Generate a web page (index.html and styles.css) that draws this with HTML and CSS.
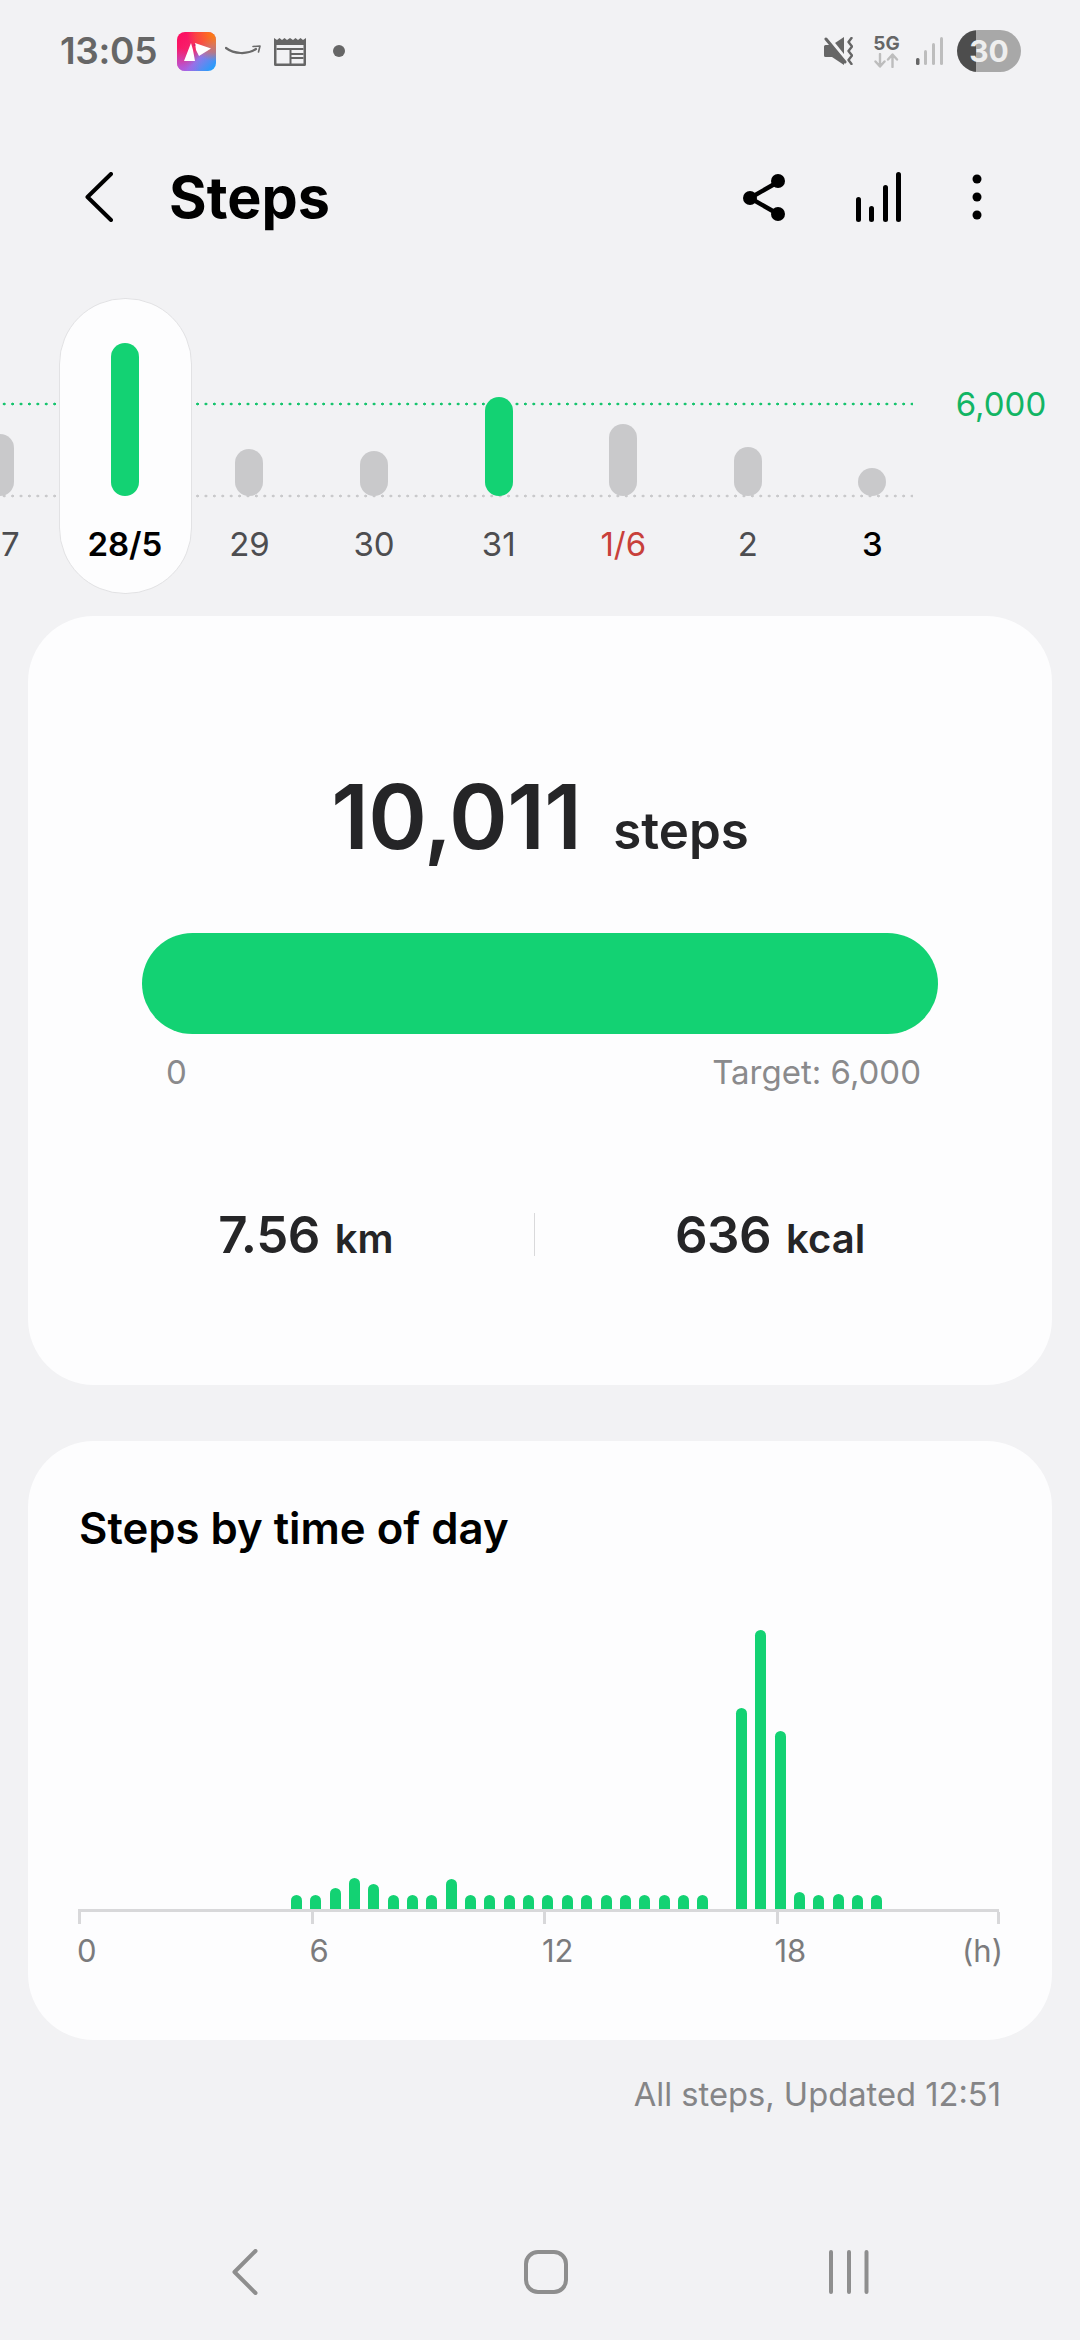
FILE: index.html
```html
<!DOCTYPE html>
<html lang="en">
<head>
<meta charset="utf-8">
<title>Steps</title>
<link rel="stylesheet" href="styles.css">
</head>
<body>
<div class="screen">
  <div class="status">
    <div class="status-left">
      <span class="time">13:05</span>
      <svg class="ic-app" width="39" height="39" viewBox="0 0 39 39">
        <defs>
          <linearGradient id="ga" x1="0" y1="0" x2="1" y2="1"><stop offset="0" stop-color="#ff0a5e"/><stop offset=".45" stop-color="#f3266f"/><stop offset=".62" stop-color="#8f78e8"/><stop offset="1" stop-color="#0ea6ff"/></linearGradient>
          <radialGradient id="gb" cx="1" cy="0" r=".75"><stop offset="0" stop-color="#ff8a00"/><stop offset=".7" stop-color="#ff6a20" stop-opacity=".5"/><stop offset="1" stop-color="#ff6a20" stop-opacity="0"/></radialGradient>
          <radialGradient id="gc" cx="0" cy="1" r=".6"><stop offset="0" stop-color="#b05ae6"/><stop offset="1" stop-color="#b05ae6" stop-opacity="0"/></radialGradient>
        </defs>
        <rect width="39" height="39" rx="8" fill="url(#ga)"/>
        <rect width="39" height="39" rx="8" fill="url(#gb)"/>
        <rect width="39" height="39" rx="8" fill="url(#gc)"/>
        <path d="M7 29 L14 11 L16 18 L18 29 Z M18 11 L34 16.500 L22 24 L19 18 Z" fill="#fff"/>
        <circle cx="17.500" cy="13" r="1" fill="#d01a70"/>
      </svg>
      <svg class="ic-smile" width="36" height="12" viewBox="0 0 36 12">
        <path d="M1 3 C9 9 22 10 31 4" fill="none" stroke="#6a6a6a" stroke-width="2.200" stroke-linecap="round"/>
        <path d="M28 1.500 L35 1 L33.500 7" fill="none" stroke="#6a6a6a" stroke-width="1.600" stroke-linecap="round" stroke-linejoin="round"/>
      </svg>
      <svg class="ic-news" width="32" height="29" viewBox="0 0 32 29">
        <path d="M0 1 L3 3 L5.500 1 L8 3 L10.500 1 L13 3 L16 1 L19 3 L21.500 1 L24 3 L26.500 1 L29 3 L32 1 V27.500 Q32 29 30.500 29 H1.500 Q0 29 0 27.500 Z" fill="#666"/>
        <rect x="2.500" y="8" width="27" height="18.500" fill="#f2f2f4"/>
        <rect x="2.500" y="11" width="27" height="2" fill="#666"/>
        <rect x="15.500" y="12" width="2" height="15" fill="#666"/>
        <rect x="17" y="16" width="12.500" height="2" fill="#666"/>
        <rect x="17" y="20" width="12.500" height="2" fill="#666"/>
      </svg>
      <span class="dot"></span>
    </div>
    <div class="status-right">
      <svg class="ic-mute" width="29" height="28" viewBox="0 0 29 28">
        <path d="M1.500 8 H8 L20 0 V28 L8 20 H1.500 Q0 20 0 18.500 V9.500 Q0 8 1.500 8 Z" fill="#666"/>
        <path d="M3 -1 L23 24" stroke="#f2f2f4" stroke-width="4"/>
        <path d="M2 2 L21 25" stroke="#666" stroke-width="3" stroke-linecap="round"/>
        <path d="M27.500 1 L24.500 5 L28 9.500 L24.500 14 L28 18.500 L24.500 23 L27.500 27" fill="none" stroke="#666" stroke-width="2.400" stroke-linecap="round" stroke-linejoin="round"/>
      </svg>
      <div class="net">
        <span class="net-label">5G</span>
        <svg width="25" height="15" viewBox="0 0 25 15">
          <path d="M6 1 V13 M1.500 8.500 L6 13.500 L10.500 8.500 M18.500 14 V2 M14 6.500 L18.500 1.500 L23 6.500" fill="none" stroke="#bdbdbd" stroke-width="2.400" stroke-linecap="round" stroke-linejoin="round"/>
        </svg>
      </div>
      <svg class="ic-signal" width="27" height="28" viewBox="0 0 27 28">
        <rect x="0" y="21" width="3.500" height="7" rx="1.500" fill="#666"/>
        <rect x="8" y="13" width="3" height="15" rx="1.500" fill="#bdbdbd"/>
        <rect x="16" y="6" width="3" height="22" rx="1.500" fill="#bdbdbd"/>
        <rect x="24" y="0" width="3" height="28" rx="1.500" fill="#bdbdbd"/>
      </svg>
      <span class="battery">30</span>
    </div>
  </div>

  <header class="appbar">
    <svg class="ic-back" width="28" height="50" viewBox="0 0 28 50">
      <path d="M26 2 L2.500 25 L26 48" fill="none" stroke="#000" stroke-width="4" stroke-linecap="round" stroke-linejoin="round"/>
    </svg>
    <h1 class="title">Steps</h1>
    <div class="actions">
      <svg width="42" height="47" viewBox="0 0 42 47">
        <path d="M35 8 L7 24 L35 40" fill="none" stroke="#000" stroke-width="4.500"/>
        <circle cx="35" cy="7" r="7" fill="#000"/><circle cx="7" cy="24" r="7" fill="#000"/><circle cx="35" cy="40" r="7" fill="#000"/>
      </svg>
      <svg width="45" height="50" viewBox="0 0 45 50">
        <rect x="0" y="25" width="5" height="25" rx="2.500" fill="#000"/>
        <rect x="13" y="34" width="5" height="16" rx="2.500" fill="#000"/>
        <rect x="27" y="13" width="5" height="37" rx="2.500" fill="#000"/>
        <rect x="40" y="0" width="5" height="50" rx="2.500" fill="#000"/>
      </svg>
      <svg width="10" height="46" viewBox="0 0 10 46">
        <circle cx="5" cy="5" r="4.500" fill="#000"/><circle cx="5" cy="23" r="4.500" fill="#000"/><circle cx="5" cy="41" r="4.500" fill="#000"/>
      </svg>
    </div>
  </header>

  <section class="strip">
    <div class="guide guide-goal"></div>
    <div class="guide guide-base"></div>
    <div class="day day-first"><div class="slot"><span class="bar" style="height:62px"></span></div><span class="day-label">27</span></div>
    <div class="day day-sel"><div class="slot"><span class="bar bar-on" style="height:153px"></span></div><span class="day-label">28/5</span></div>
    <div class="day"><div class="slot"><span class="bar" style="height:47px"></span></div><span class="day-label">29</span></div>
    <div class="day"><div class="slot"><span class="bar" style="height:45px"></span></div><span class="day-label">30</span></div>
    <div class="day"><div class="slot"><span class="bar bar-on" style="height:99px"></span></div><span class="day-label">31</span></div>
    <div class="day"><div class="slot"><span class="bar" style="height:72px"></span></div><span class="day-label day-sun">1/6</span></div>
    <div class="day"><div class="slot"><span class="bar" style="height:49px"></span></div><span class="day-label">2</span></div>
    <div class="day"><div class="slot"><span class="bar" style="height:28px"></span></div><span class="day-label day-today">3</span></div>
    <span class="goal-label">6,000</span>
  </section>

  <section class="card card-summary">
    <div class="hero"><span class="hero-num">10,011</span><span class="hero-unit">steps</span></div>
    <div class="progress"></div>
    <div class="progress-labels"><span>0</span><span>Target: 6,000</span></div>
    <div class="stats">
      <div class="stat"><span class="stat-num">7.56</span><span class="stat-unit">km</span></div>
      <span class="stat-div"></span>
      <div class="stat"><span class="stat-num">636</span><span class="stat-unit">kcal</span></div>
    </div>
  </section>

  <section class="card card-day">
    <h2 class="card-title">Steps by time of day</h2>
    <div class="hours">
      <span class="hbar" style="height:14px"></span><span class="hbar" style="height:14px"></span><span class="hbar" style="height:21px"></span><span class="hbar" style="height:31px"></span><span class="hbar" style="height:25px"></span><span class="hbar" style="height:14px"></span><span class="hbar" style="height:14px"></span><span class="hbar" style="height:14px"></span><span class="hbar" style="height:30px"></span><span class="hbar" style="height:14px"></span><span class="hbar" style="height:14px"></span><span class="hbar" style="height:14px"></span><span class="hbar" style="height:14px"></span><span class="hbar" style="height:14px"></span><span class="hbar" style="height:14px"></span><span class="hbar" style="height:14px"></span><span class="hbar" style="height:14px"></span><span class="hbar" style="height:14px"></span><span class="hbar" style="height:14px"></span><span class="hbar" style="height:14px"></span><span class="hbar" style="height:14px"></span><span class="hbar" style="height:14px"></span><span class="hbar hbar-empty"></span><span class="hbar" style="height:201px"></span><span class="hbar" style="height:279px"></span><span class="hbar" style="height:178px"></span><span class="hbar" style="height:17px"></span><span class="hbar" style="height:14px"></span><span class="hbar" style="height:15px"></span><span class="hbar" style="height:14px"></span><span class="hbar" style="height:14px"></span>
    </div>
    <div class="axis">
      <span class="tick"></span><span class="tick"></span><span class="tick"></span><span class="tick"></span><span class="tick tick-end"></span>
    </div>
    <div class="axis-labels">
      <span>0</span><span>6</span><span>12</span><span class="axis-last">18</span><span class="axis-unit">(h)</span>
    </div>
  </section>

  <p class="updated">All steps, Updated 12:51</p>

  <nav class="navbar">
    <svg width="26" height="46" viewBox="0 0 26 46"><path d="M23.500 2 L2.500 23 L23.500 44" fill="none" stroke="#8e8e8e" stroke-width="4" stroke-linecap="round" stroke-linejoin="round"/></svg>
    <svg width="44" height="44" viewBox="0 0 44 44"><rect x="2" y="2" width="40" height="40" rx="12" fill="none" stroke="#8e8e8e" stroke-width="4"/></svg>
    <svg width="40" height="44" viewBox="0 0 40 44"><path d="M2 2 V42 M20 2 V42 M37.500 2 V42" fill="none" stroke="#8e8e8e" stroke-width="4" stroke-linecap="round"/></svg>
  </nav>
</div>
</body>
</html>
```

FILE: styles.css
```css
* { box-sizing: border-box; }
html, body { margin: 0; padding: 0; }
body { background: #f2f2f4; font-family: Inter, "Liberation Sans", sans-serif; color: #252527; }
.screen { width: 1080px; height: 2340px; overflow: hidden; }

/* status bar */
.status { height: 102px; padding: 0 59px 0 60px; display: flex; align-items: center; justify-content: space-between; }
.status-left, .status-right { display: flex; align-items: center; }
.time { font-size: 37px; font-weight: 600; color: #666; line-height: 44px; letter-spacing: -.3px; width: 99px; }
.ic-app { margin-left: 18px; }
.ic-smile { margin-left: 9px; }
.ic-news { margin-left: 13px; }
.dot { width: 12px; height: 12px; border-radius: 50%; background: #666; margin-left: 27px; }
.net { margin-left: 21px; width: 25px; display: flex; flex-direction: column; align-items: center; }
.net-label { font-size: 19px; font-weight: 700; line-height: 18px; color: #666; }
.ic-signal { margin-left: 17px; }
.battery { margin-left: 14px; width: 64px; height: 42px; border-radius: 21px; background: linear-gradient(90deg, #4d4d4d 19px, #a8a8a8 19px); color: #eee; font-size: 30px; font-weight: 700; line-height: 42px; text-align: center; }

/* app bar */
.appbar { height: 190px; padding: 0 98px 0 85px; display: flex; align-items: center; }
.title { margin: 0 0 0 56px; font-size: 57.500px; font-weight: 700; line-height: 70px; color: #000; }
.actions { margin-left: auto; display: flex; align-items: center; gap: 71px; }

/* week strip */
.strip { position: relative; height: 324px; display: flex; overflow: hidden; }
.guide { position: absolute; left: 0; width: 913px; height: 4px; background-size: 8.42px 4px; }
.guide-goal { top: 110px; background-image: radial-gradient(circle, #17c46e 1.2px, transparent 1.7px); }
.guide-base { top: 202px; background-image: radial-gradient(circle, #c9c9cb 1.2px, transparent 1.7px); }
.day { position: relative; flex: 0 0 124.6px; display: flex; flex-direction: column; align-items: center; }
.day-first { margin-left: -62px; }
.day-sel::before { content: ""; position: absolute; left: -4px; top: 6px; width: 131px; height: 294px; border-radius: 66px; background: #fdfdfe; border: 1px solid #e2e2e4; }
.slot { position: relative; height: 204px; display: flex; align-items: flex-end; }
.bar { display: block; width: 28px; border-radius: 14px; background: #c9c9cb; }
.bar-on { background: #13d273; }
.day-label { position: relative; margin-top: 28px; font-size: 33px; line-height: 40px; color: #4d4d50; }
.day-sel .day-label { color: #000; font-weight: 600; }
.day-sun { color: #c8403a; }
.day-today { color: #000; font-weight: 500; }
.goal-label { margin: 92px 0 0 21px; font-size: 33px; line-height: 40px; color: #12b564; height: 40px; white-space: nowrap; }

/* cards */
.card { margin: 0 28px; background: #fdfdfe; border-radius: 66px; }
.card-summary { height: 769px; padding-top: 151px; }
.hero { display: flex; justify-content: center; align-items: baseline; gap: 32px; line-height: 100px; }
.hero-num { font-size: 89px; font-weight: 600; letter-spacing: -.6px; }
.hero-unit { font-size: 51px; font-weight: 600; line-height: 52px; }
.progress { margin: 66px 114px 0; height: 101px; border-radius: 51px; background: #13d273; }
.progress-labels { margin: 18px 131px 0 138px; display: flex; justify-content: space-between; font-size: 33px; line-height: 40px; color: #8a8a8c; }
.stats { margin: 113px 47px 0 50px; display: grid; grid-template-columns: 456px 1px 470px; }
.stat { display: flex; justify-content: center; align-items: baseline; gap: 15px; height: 60px; line-height: 60px; }
.stat-num { font-size: 51px; font-weight: 600; letter-spacing: -.5px; }
.stat-unit { font-size: 40px; font-weight: 600; line-height: 40px; }
.stat-div { display: block; height: 43px; margin-top: 8px; background: #d9d9db; }

.card-day { margin-top: 56px; height: 599px; padding: 60px 53px 0 50px; }
.card-title { margin: 0 0 0 1px; font-size: 43.700px; font-weight: 600; line-height: 56px; color: #000; }
.hours { height: 352px; padding-left: 213px; display: flex; align-items: flex-end; gap: 8.35px; }
.hbar { display: block; flex: none; width: 11px; border-radius: 5.500px 5.500px 0 0; background: #13d273; }
.hbar-empty { background: none; }
.axis { height: 15px; border-top: 3px solid #d8d8da; display: flex; }
.tick { flex: 0 0 232.5px; height: 12px; }
.tick::before { content: ""; display: block; width: 3px; height: 12px; background: #d8d8da; }
.tick-end { flex: 0 0 3px; margin-left: -11px; }
.axis-labels { margin: 7px -4px 0 -1px; display: flex; font-size: 31px; line-height: 40px; color: #7b7b7d; }
.axis-labels span { flex: 0 0 232.5px; }
.axis-labels .axis-last { flex: 0 0 auto; }
.axis-labels .axis-unit { flex: 0 0 auto; margin-left: auto; }

.updated { margin: 34px 79px 0 0; font-size: 32.700px; line-height: 40px; color: #858587; text-align: right; }

/* nav bar */
.navbar { margin-top: 135px; padding-left: 232px; display: grid; grid-template-columns: 292px 305px 40px; align-items: center; height: 46px; }
```
